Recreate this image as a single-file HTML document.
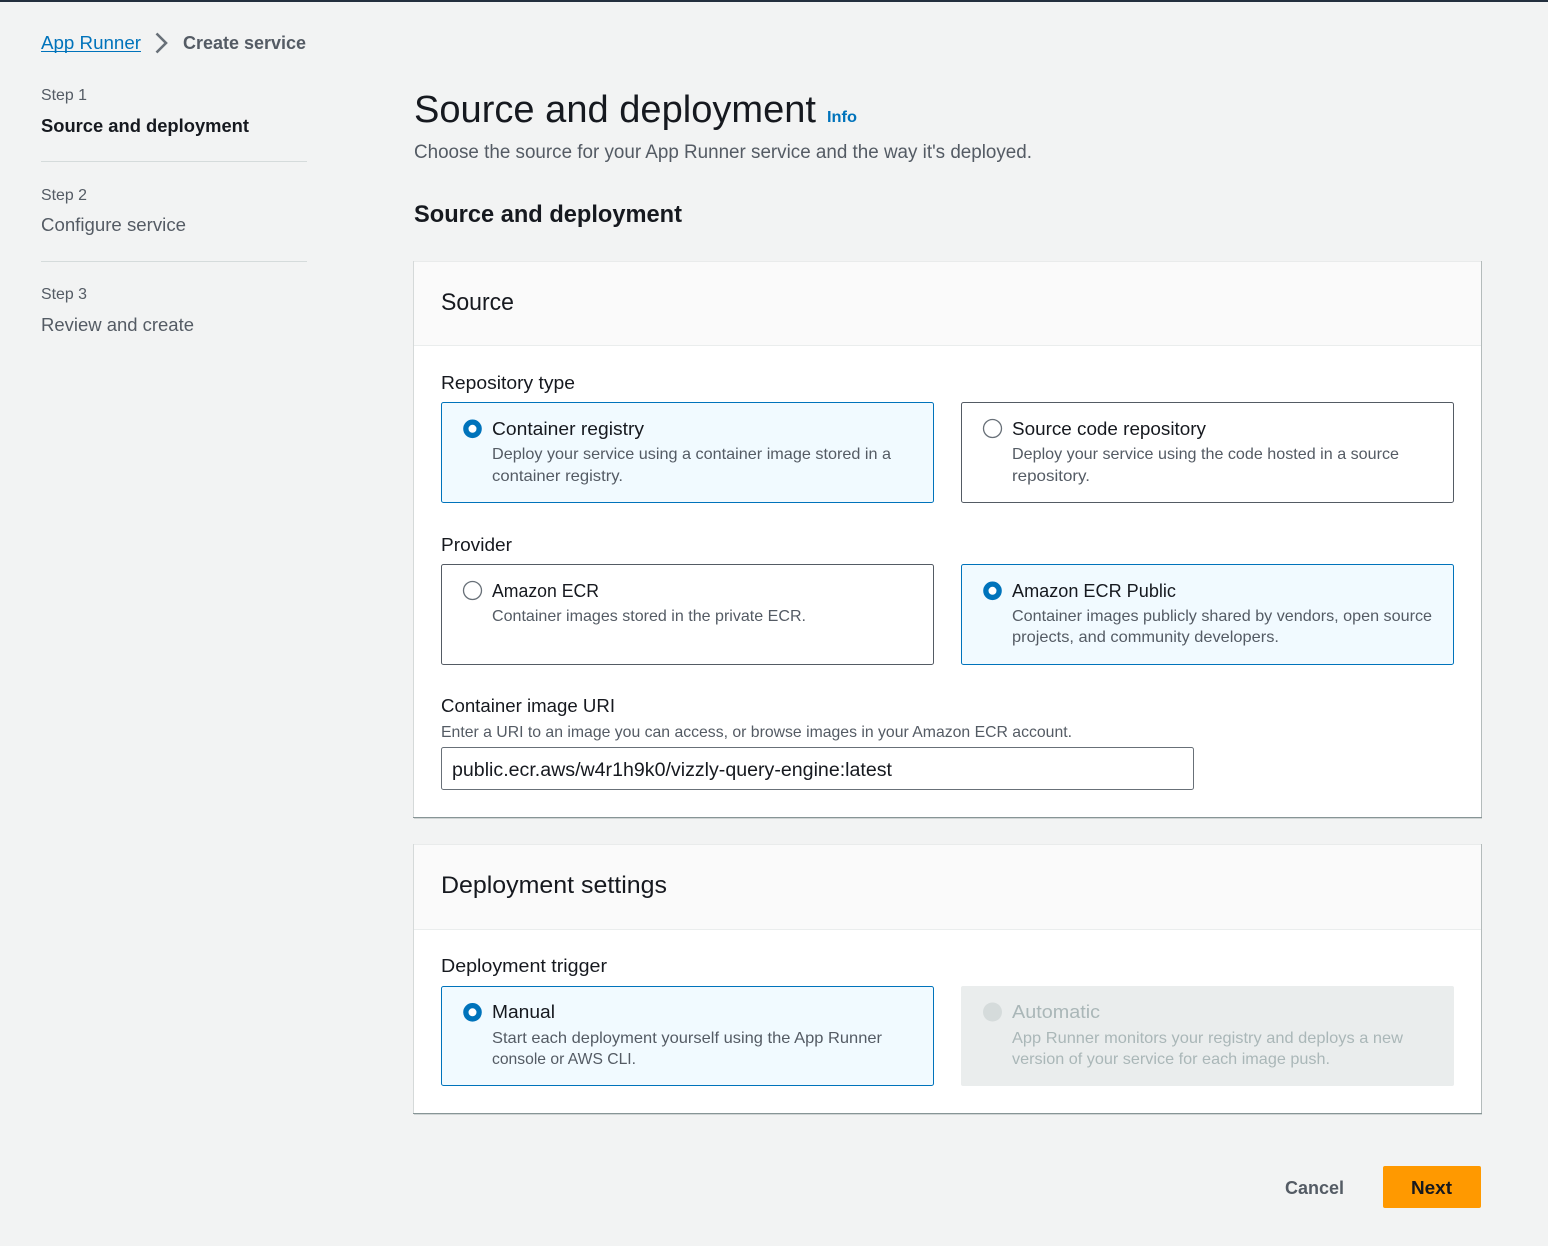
<!DOCTYPE html>
<html lang="en"><head><meta charset="utf-8"><title>Source and deployment</title>
<style>
html,body{margin:0;padding:0;width:1548px;height:1246px;overflow:hidden;background:#f2f3f3}
svg{display:block;position:absolute;left:0;top:0}
text{font-family:"Liberation Sans",sans-serif;white-space:pre}
.b{font-weight:700}
.d{fill:#16191f}.g{fill:#545b64}.l{fill:#0073bb}.m{fill:#aab7b8}
.s{font-size:16px}.n{font-size:18px}
</style></head><body>
<svg width="1548" height="1246" viewBox="0 0 1548 1246" xmlns="http://www.w3.org/2000/svg">
<rect width="1548" height="1246" fill="#f2f3f3"/>
<rect width="1548" height="2" fill="#232f3e"/>

<text x="41" y="49" class="n l" textLength="100" lengthAdjust="spacingAndGlyphs">App Runner</text>
<rect x="41" y="51" width="100" height="1" fill="#0073bb"/>
<path d="M156.5 33.5l9.5 9.5-9.5 9.5" fill="none" stroke="#687078" stroke-width="2.6"/>
<text x="183" y="49" class="n g b" textLength="123" lengthAdjust="spacingAndGlyphs">Create service</text>

<text x="41" y="100" class="s g" textLength="46" lengthAdjust="spacingAndGlyphs">Step 1</text>
<text x="41" y="132" class="n d b" textLength="208" lengthAdjust="spacingAndGlyphs">Source and deployment</text>
<rect x="41" y="161" width="266" height="1" fill="#d5dbdb"/>
<text x="41" y="200" class="s g" textLength="46" lengthAdjust="spacingAndGlyphs">Step 2</text>
<text x="41" y="231" class="n g" textLength="145" lengthAdjust="spacingAndGlyphs">Configure service</text>
<rect x="41" y="261" width="266" height="1" fill="#d5dbdb"/>
<text x="41" y="299" class="s g" textLength="46" lengthAdjust="spacingAndGlyphs">Step 3</text>
<text x="41" y="331" class="n g" textLength="153" lengthAdjust="spacingAndGlyphs">Review and create</text>

<text x="414" y="122" font-size="38" class="d" textLength="402" lengthAdjust="spacingAndGlyphs">Source and deployment</text>
<text x="827" y="122" class="s l b" textLength="30" lengthAdjust="spacingAndGlyphs">Info</text>
<text x="414" y="158" font-size="19" class="g" textLength="618" lengthAdjust="spacingAndGlyphs">Choose the source for your App Runner service and the way it's deployed.</text>
<text x="414" y="222" font-size="24" class="d b" textLength="268" lengthAdjust="spacingAndGlyphs">Source and deployment</text>

<!-- Source card -->
<rect x="414" y="261" width="1067" height="556" fill="#fff"/>
<rect x="414" y="261" width="1067" height="84" fill="#fafafa"/>
<rect x="414" y="261" width="1067" height="1" fill="#e9ebeb"/>
<rect x="414" y="345" width="1067" height="1" fill="#eaeded"/>
<rect x="413" y="261" width="1" height="556" fill="#d5d9d9"/>
<rect x="1481" y="261" width="1" height="557" fill="#b4bbbb"/>
<rect x="413" y="817" width="1069" height="1" fill="#879596"/>
<rect x="414" y="818" width="1068" height="1" fill="#d0d5d5"/>
<text x="441" y="310" font-size="24" class="d" textLength="73" lengthAdjust="spacingAndGlyphs">Source</text>

<text x="441" y="389" class="n d" textLength="134" lengthAdjust="spacingAndGlyphs">Repository type</text>
<rect x="441.5" y="402.5" width="492" height="100" rx="2" fill="#f1faff" stroke="#0073bb"/>
<circle cx="472.5" cy="428.8" r="6.65" fill="#fff" stroke="#0073bb" stroke-width="5.3"/>
<text x="492" y="435" class="n d" textLength="152" lengthAdjust="spacingAndGlyphs">Container registry</text>
<text x="492" y="459" class="s g" textLength="399" lengthAdjust="spacingAndGlyphs">Deploy your service using a container image stored in a</text>
<text x="492" y="481" class="s g" textLength="131" lengthAdjust="spacingAndGlyphs">container registry.</text>

<rect x="961.5" y="402.5" width="492" height="100" rx="2" fill="#fff" stroke="#545b64"/>
<circle cx="992.5" cy="428.5" r="9" fill="#fff" stroke="#687078" stroke-width="1.3"/>
<text x="1012" y="435" class="n d" textLength="194" lengthAdjust="spacingAndGlyphs">Source code repository</text>
<text x="1012" y="459" class="s g" textLength="387" lengthAdjust="spacingAndGlyphs">Deploy your service using the code hosted in a source</text>
<text x="1012" y="481" class="s g" textLength="78" lengthAdjust="spacingAndGlyphs">repository.</text>

<text x="441" y="551" class="n d" textLength="71" lengthAdjust="spacingAndGlyphs">Provider</text>
<rect x="441.5" y="564.5" width="492" height="100" rx="2" fill="#fff" stroke="#545b64"/>
<circle cx="472.5" cy="590.5" r="9" fill="#fff" stroke="#687078" stroke-width="1.3"/>
<text x="492" y="597" class="n d" textLength="107" lengthAdjust="spacingAndGlyphs">Amazon ECR</text>
<text x="492" y="621" class="s g" textLength="314" lengthAdjust="spacingAndGlyphs">Container images stored in the private ECR.</text>

<rect x="961.5" y="564.5" width="492" height="100" rx="2" fill="#f1faff" stroke="#0073bb"/>
<circle cx="992.5" cy="590.8" r="6.65" fill="#fff" stroke="#0073bb" stroke-width="5.3"/>
<text x="1012" y="597" class="n d" textLength="164" lengthAdjust="spacingAndGlyphs">Amazon ECR Public</text>
<text x="1012" y="621" class="s g" textLength="420" lengthAdjust="spacingAndGlyphs">Container images publicly shared by vendors, open source</text>
<text x="1012" y="642" class="s g" textLength="267" lengthAdjust="spacingAndGlyphs">projects, and community developers.</text>

<text x="441" y="712" class="n d" textLength="174" lengthAdjust="spacingAndGlyphs">Container image URI</text>
<text x="441" y="737" class="s g" textLength="631" lengthAdjust="spacingAndGlyphs">Enter a URI to an image you can access, or browse images in your Amazon ECR account.</text>
<rect x="441.5" y="747.5" width="752" height="42" rx="2" fill="#fff" stroke="#687078"/>
<text x="452" y="776" font-size="19" class="d" textLength="440" lengthAdjust="spacingAndGlyphs">public.ecr.aws/w4r1h9k0/vizzly-query-engine:latest</text>

<!-- Deployment card -->
<rect x="414" y="844" width="1067" height="269" fill="#fff"/>
<rect x="414" y="844" width="1067" height="85" fill="#fafafa"/>
<rect x="414" y="844" width="1067" height="1" fill="#e9ebeb"/>
<rect x="414" y="929" width="1067" height="1" fill="#eaeded"/>
<rect x="413" y="844" width="1" height="269" fill="#d5d9d9"/>
<rect x="1481" y="844" width="1" height="270" fill="#b4bbbb"/>
<rect x="413" y="1113" width="1069" height="1" fill="#879596"/>
<rect x="414" y="1114" width="1068" height="1" fill="#d0d5d5"/>
<text x="441" y="893" font-size="24" class="d" textLength="226" lengthAdjust="spacingAndGlyphs">Deployment settings</text>

<text x="441" y="972" class="n d" textLength="166" lengthAdjust="spacingAndGlyphs">Deployment trigger</text>
<rect x="441.5" y="986.5" width="492" height="99" rx="2" fill="#f1faff" stroke="#0073bb"/>
<circle cx="472.5" cy="1012.3" r="6.65" fill="#fff" stroke="#0073bb" stroke-width="5.3"/>
<text x="492" y="1018" class="n d" textLength="63" lengthAdjust="spacingAndGlyphs">Manual</text>
<text x="492" y="1043" class="s g" textLength="390" lengthAdjust="spacingAndGlyphs">Start each deployment yourself using the App Runner</text>
<text x="492" y="1064" class="s g" textLength="144" lengthAdjust="spacingAndGlyphs">console or AWS CLI.</text>

<rect x="961" y="986" width="493" height="100" rx="2" fill="#eaeded"/>
<circle cx="992.5" cy="1012" r="9.5" fill="#d5dbdb"/>
<text x="1012" y="1018" class="n m" textLength="88" lengthAdjust="spacingAndGlyphs">Automatic</text>
<text x="1012" y="1043" class="s m" textLength="391" lengthAdjust="spacingAndGlyphs">App Runner monitors your registry and deploys a new</text>
<text x="1012" y="1064" class="s m" textLength="318" lengthAdjust="spacingAndGlyphs">version of your service for each image push.</text>

<!-- Actions -->
<text x="1285" y="1194" class="n b" fill="#545b64" textLength="59" lengthAdjust="spacingAndGlyphs">Cancel</text>
<rect x="1383" y="1166" width="98" height="42" rx="2" fill="#ff9900"/>
<text x="1411" y="1194" class="n d b" textLength="41" lengthAdjust="spacingAndGlyphs">Next</text>
</svg>
</body></html>
